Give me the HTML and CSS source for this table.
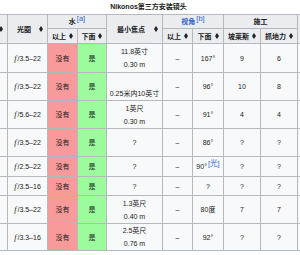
FILE: index.html
```html
<!DOCTYPE html>
<html lang="zh">
<head>
<meta charset="utf-8">
<title>Nikonos第三方安装镜头</title>
<link rel="stylesheet" href="styles.css">
</head>
<body>
<div class="wrap">
<table class="lens">
<caption>Nikonos第三方安装镜头</caption>
<colgroup>
<col class="c-name"><col class="c-ap"><col class="c-w"><col class="c-w2"><col class="c-focus"><col class="c-v"><col class="c-v2"><col class="c-b"><col class="c-b"><col class="c-more">
</colgroup>
<thead>
<tr class="h1">
<th rowspan="2" class="sortable"><div class="hc"><span class="ht"></span><span class="sort"></span></div></th>
<th rowspan="2" class="sortable"><div class="hc"><span class="ht">光圈</span><span class="sort"></span></div></th>
<th colspan="2">水<sup class="ref">[a]</sup></th>
<th rowspan="2" class="sortable"><div class="hc"><span class="ht">最小焦点</span><span class="sort"></span></div></th>
<th colspan="2"><span class="link">视角</span><sup class="ref">[b]</sup></th>
<th colspan="2">施工</th>
<th rowspan="2"></th>
</tr>
<tr class="h2">
<th class="sortable"><div class="hc"><span class="ht">以上</span><span class="sort"></span></div></th>
<th class="sortable"><div class="hc"><span class="ht">下面</span><span class="sort"></span></div></th>
<th class="sortable"><div class="hc"><span class="ht">以上</span><span class="sort"></span></div></th>
<th class="sortable"><div class="hc"><span class="ht">下面</span><span class="sort"></span></div></th>
<th class="sortable"><div class="hc"><span class="ht">坡莱斯</span><span class="sort"></span></div></th>
<th class="sortable"><div class="hc"><span class="ht">抓地力</span><span class="sort"></span></div></th>
</tr>
</thead>
<tbody>
<tr class="r1">
<td></td><td><i class="fn">f</i>/3.5–22</td><td class="no">没有</td><td class="yes">是</td>
<td>11.8英寸<br>0.30 m</td><td>–</td><td>167°</td><td>9</td><td>6</td><td></td>
</tr>
<tr class="r2">
<td></td><td><i class="fn">f</i>/3.5–22</td><td class="no">没有</td><td class="yes">是</td>
<td>&nbsp;<br>0.25米内10英寸</td><td>–</td><td>96°</td><td>10</td><td>8</td><td></td>
</tr>
<tr class="r3">
<td></td><td><i class="fn">f</i>/5.6–22</td><td class="no">没有</td><td class="yes">是</td>
<td>1英尺<br>0.30 m</td><td>–</td><td>91°</td><td>4</td><td>4</td><td></td>
</tr>
<tr class="r4">
<td></td><td><i class="fn">f</i>/3.5–22</td><td class="no">没有</td><td class="yes">是</td>
<td>?</td><td>–</td><td>86°</td><td>?</td><td>?</td><td></td>
</tr>
<tr class="r5">
<td></td><td><i class="fn">f</i>/2.5–22</td><td class="no">没有</td><td class="yes">是</td>
<td>?</td><td>–</td><td>90°<sup class="ref">[光]</sup></td><td>?</td><td>?</td><td></td>
</tr>
<tr class="r6">
<td></td><td><i class="fn">f</i>/3.5–16</td><td class="no">没有</td><td class="yes">是</td>
<td>?</td><td>–</td><td>?</td><td>?</td><td>?</td><td></td>
</tr>
<tr class="r7">
<td></td><td><i class="fn">f</i>/3.5–22</td><td class="no">没有</td><td class="yes">是</td>
<td>1.3英尺<br>0.40 m</td><td>–</td><td>80度</td><td>7</td><td>7</td><td></td>
</tr>
<tr class="r8">
<td></td><td><i class="fn">f</i>/3.3–16</td><td class="no">没有</td><td class="yes">是</td>
<td>2.5英尺<br>0.76 m</td><td>–</td><td>92°</td><td>?</td><td>?</td><td></td>
</tr>
</tbody>
</table>
</div>
</body>
</html>
```

FILE: styles.css
```css
html, body {
  margin: 0;
  background: #fff;
}

body {
  font-family: "Liberation Sans", "Noto Sans CJK SC", sans-serif;
  font-size: 7px;
  color: #202122;
}

.wrap {
  width: 300px;
  height: 255px;
  overflow: hidden;
}

.lens {
  border-collapse: collapse;
  table-layout: fixed;
  width: 342px;
  margin-left: -23px;
  background: #f8f9fa;
  border: 1px solid #b4b9c0;
}

.lens caption {
  font-weight: bold;
  line-height: 14px;
  text-align: center;
}

.c-name { width: 30px; }
.c-ap { width: 40px; }
.c-w { width: 30px; }
.c-w2 { width: 29px; }
.c-focus { width: 56px; }
.c-v { width: 30px; }
.c-v2 { width: 31px; }
.c-b { width: 37px; }
.c-more { width: 22px; }

.lens th,
.lens td {
  border: 1px solid #b4b9c0;
  padding: 0 2px;
  line-height: 13px;
  text-align: center;
  vertical-align: middle;
  white-space: nowrap;
  overflow: hidden;
}

.lens th {
  background: #eaecf0;
  font-weight: bold;
}

.lens th.sortable {
  padding: 0 4px 0 3px;
}

.hc {
  display: flex;
  align-items: center;
}

.ht {
  flex: 1;
  text-align: center;
}

.sort {
  display: inline-flex;
  flex-direction: column;
  margin-left: 2px;
}

.sort::before {
  content: "";
  border-left: 2px solid transparent;
  border-right: 2px solid transparent;
  border-bottom: 3px solid #202122;
}

.sort::after {
  content: "";
  border-left: 2px solid transparent;
  border-right: 2px solid transparent;
  border-top: 3px solid #202122;
}

.h1 { height: 14px; }
.h2 { height: 15px; }
.r1 { height: 29px; }
.r2, .r3, .r4, .r7 { height: 28px; }
.r5 { height: 20px; }
.r6 { height: 19px; }
.r8 { height: 27px; }

.ref {
  font-size: 7.5px;
  font-weight: normal;
  color: #3366cc;
  line-height: 1;
  vertical-align: 3px;
  margin-left: 1px;
}

.link {
  color: #3366cc;
}

.fn {
  font-family: "Liberation Serif", serif;
  font-size: 8px;
  margin-right: 1px;
}

.lens td.no {
  background: #f99a9a;
}

.lens td.yes {
  background: #9cfb9c;
}
```
